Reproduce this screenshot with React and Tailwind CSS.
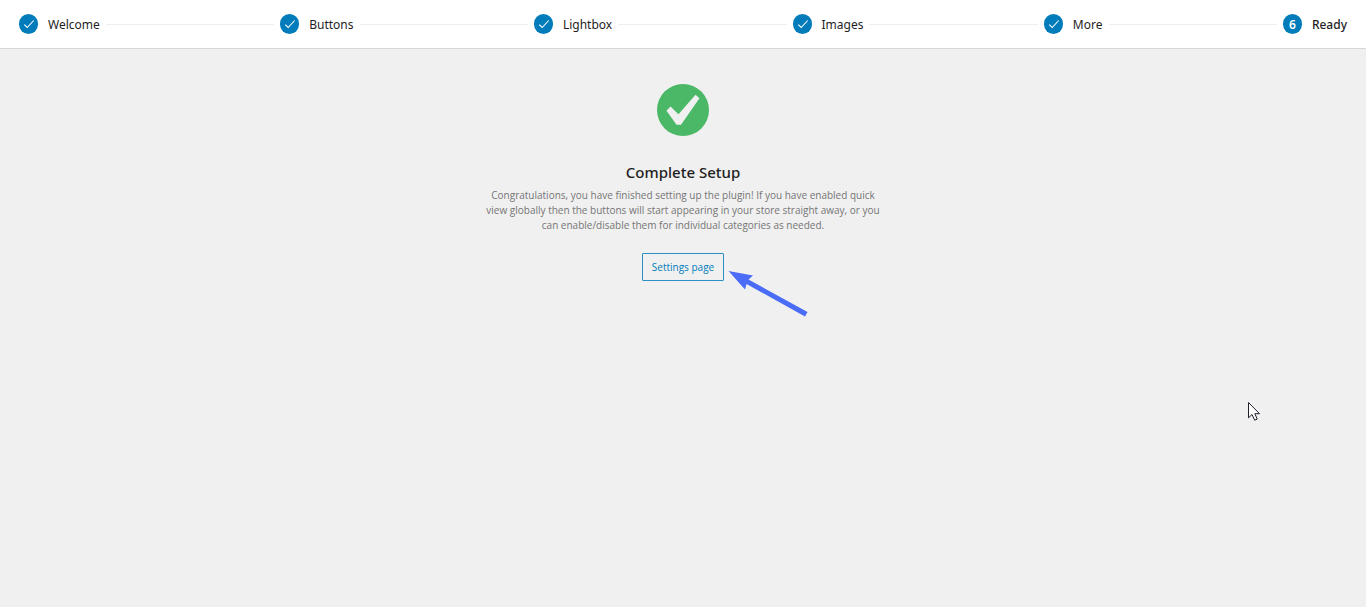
import React from 'react';

const steps = [
  { label: 'Welcome', done: true },
  { label: 'Buttons', done: true },
  { label: 'Lightbox', done: true },
  { label: 'Images', done: true },
  { label: 'More', done: true },
  { label: 'Ready', done: false }
];

const StepBadge = ({ number, done }) => (
  <span className="flex h-5 w-[19px] shrink-0 items-center justify-center rounded-full bg-[#007cba] text-xs font-semibold text-white">
    {done ? (
      <svg className="h-5 w-[19px]" viewBox="0 0 19 20" fill="none" aria-hidden="true">
        <path d="M5.3 10.6 8.2 13.5 14.7 6.5" stroke="#fff" strokeWidth="1.1" />
      </svg>
    ) : (
      <span className="pt-0.5">{number}</span>
    )}
  </span>
);

const Stepper = () => (
  <header className="border-b border-[#d5d8d9] bg-white px-[19px]">
    <ol className="flex h-12 items-center gap-[6px]">
      {steps.map((step, index) => (
        <React.Fragment key={step.label}>
          {index > 0 && <li className="h-px flex-1 bg-[#eeeeee]" aria-hidden="true"></li>}
          <li className="flex items-center gap-[10px]" aria-current={step.done ? undefined : 'step'}>
            <StepBadge number={index + 1} done={step.done} />
            <span className={step.done ? 'pt-0.5 text-xs' : 'pt-0.5 text-xs font-medium'}>
              {step.label}
            </span>
          </li>
        </React.Fragment>
      ))}
    </ol>
  </header>
);

const SuccessIcon = () => (
  <svg className="h-[52px] w-[52px]" viewBox="0 0 52 52" aria-hidden="true">
    <circle cx="26" cy="26" r="26" fill="#4ab866" />
    <path d="M9.5 26.7 13.5 22.4 21.5 30.2 38.5 10.8 42.5 14.2 24 40.7H19.5Z" fill="#f0f0f0" />
  </svg>
);

const Arrow = () => (
  <svg className="absolute top-4 left-full ml-1 h-12 w-20" viewBox="0 0 80 48" aria-hidden="true">
    <path d="M0.5 2 25 6.5 20.5 10.5 79.5 43 77 47.5 18.5 15 17 20.5Z" fill="#4a6cf7" />
  </svg>
);

const Pointer = () => (
  <svg className="absolute top-[401px] left-[1247px] h-5 w-[14px]" viewBox="0 0 14 20" aria-hidden="true">
    <path
      d="M1.5 1.5V16.8L5 13.5 7.7 19.2 10.2 18.1 7.8 12.7H12.5Z"
      fill="#fff"
      stroke="#20202c"
      strokeWidth="1"
    />
  </svg>
);

export default function App() {
  return (
    <div className="relative min-h-screen bg-[#f0f0f0] font-['Noto_Sans','Open_Sans',sans-serif] text-[#1e1e1e]">
      <Stepper />
      <main className="mx-auto flex max-w-[400px] flex-col items-center pt-[35px] text-center">
        <SuccessIcon />
        <h1 className="mt-6 text-[15px] leading-6 font-medium">Complete Setup</h1>
        <p className="mt-1 font-['Open_Sans','Noto_Sans',sans-serif] text-[10px] leading-[15px] text-[#757575]">
          Congratulations, you have finished setting up the plugin! If you have enabled quick view
          globally then the buttons will start appearing in your store straight away, or you can
          enable/disable them for individual categories as needed.
        </p>
        <div className="relative mt-5">
          <button
            type="button"
            className="block h-7 rounded-[1px] border border-[#2c8fc4] px-[9px] font-['Open_Sans','Noto_Sans',sans-serif] text-[10px] text-[#007cba]"
          >
            Settings page
          </button>
          <Arrow />
        </div>
      </main>
      <Pointer />
    </div>
  );
}
